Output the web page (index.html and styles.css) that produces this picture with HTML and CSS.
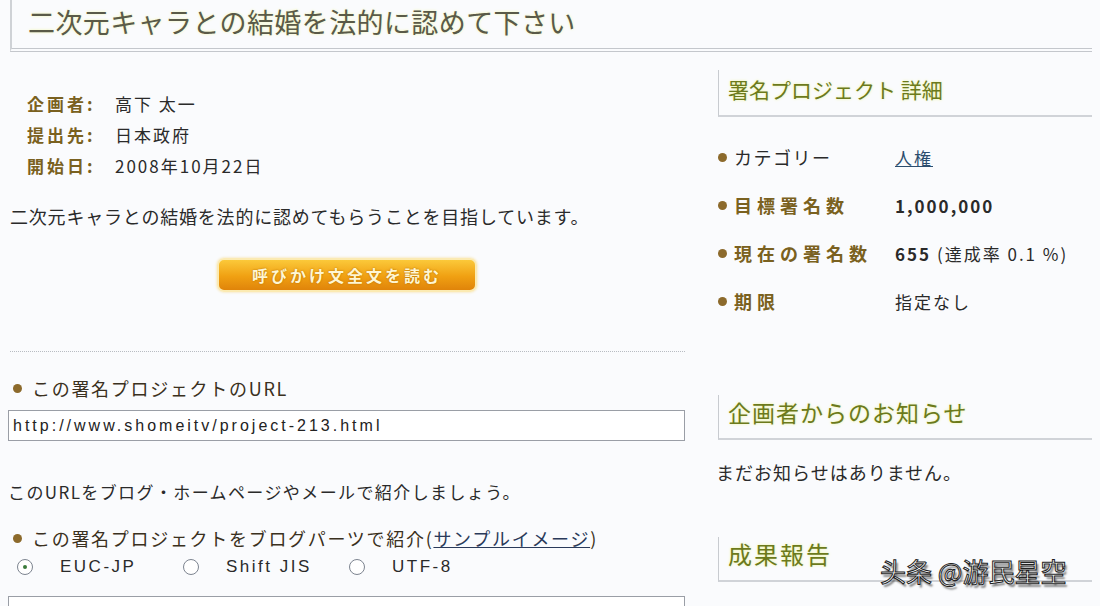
FILE: index.html
```html
<!DOCTYPE html>
<html lang="ja">
<head>
  <meta charset="UTF-8">
  <meta name="viewport" content="width=device-width, initial-scale=1.0">
  <title>署名プロジェクト</title>
  <link rel="stylesheet" href="styles.css">
</head>
<body>

  <!-- タイトル -->
  <div class="title-bar">
    <h1>二次元キャラとの結婚を法的に認めて下さい</h1>
  </div>

  <div class="main">

    <!-- 左カラム -->
    <div class="left">
      <dl class="meta">
        <div class="meta-row"><dt>企画者:</dt><dd>高下 太一</dd></div>
        <div class="meta-row"><dt>提出先:</dt><dd>日本政府</dd></div>
        <div class="meta-row"><dt>開始日:</dt><dd>2008年10月22日</dd></div>
      </dl>

      <p class="desc">二次元キャラとの結婚を法的に認めてもらうことを目指しています。</p>

      <div class="btn-wrap">
        <button class="read-btn">呼びかけ文全文を読む</button>
      </div>

      <hr class="dots">

      <h2 class="sub"><span class="dot"></span>この署名プロジェクトのURL</h2>
      <input class="url-box" type="text" value="http://www.shomeitv/project-213.html">

      <p class="intro">このURLをブログ・ホームページやメールで紹介しましょう。</p>

      <h2 class="sub second"><span class="dot"></span>この署名プロジェクトをブログパーツで紹介(<a href="#">サンプルイメージ</a>)</h2>
      <div class="radios">
        <label><span class="radio on"></span>EUC-JP</label>
        <label><span class="radio"></span>Shift JIS</label>
        <label><span class="radio"></span>UTF-8</label>
      </div>
      <div class="code-box"></div>
    </div>

    <!-- 右カラム -->
    <div class="right">
      <h3 class="box-head first">署名プロジェクト 詳細</h3>
      <ul class="detail">
        <li><span class="dot"></span><span class="label plain">カテゴリー</span><a href="#" class="val">人権</a></li>
        <li><span class="dot"></span><span class="label">目標署名数</span><span class="val strong">1,000,000</span></li>
        <li><span class="dot"></span><span class="label">現在の署名数</span><span class="val"><b>655</b> (達成率 0.1 %)</span></li>
        <li><span class="dot"></span><span class="label">期限</span><span class="val">指定なし</span></li>
      </ul>

      <h3 class="box-head notice-head">企画者からのお知らせ</h3>
      <p class="notice">まだお知らせはありません。</p>

      <h3 class="box-head report-head">成果報告</h3>
    </div>

  </div>

  <div class="watermark">头条 @游民星空</div>

</body>
</html>
```

FILE: styles.css
```css
* {
  box-sizing: border-box;
}

body {
  margin: 0;
  padding: 0;
  background-color: #fafbfd;
  font-family: 'Noto Sans CJK JP', 'Liberation Sans', sans-serif;
  color: #2a2a2a;
  position: relative;
  overflow: hidden;
  height: 606px;
}

/* タイトル */
.title-bar {
  margin: 0 8px 0 10px;
  height: 52px;
  border-left: 2px solid #cfd2d6;
  border-bottom: 4px double #c4c7cc;
  padding-left: 16px;
}

.title-bar h1 {
  margin: 0;
  font-size: 27px;
  font-weight: normal;
  line-height: 44px;
  letter-spacing: 0.4px;
  color: #5a5a48;
  text-shadow: 0 0 3px #f3f7b0;
}

.main {
  display: flex;
}

/* 左カラム */
.left {
  width: 700px;
  padding-left: 8px;
}

.meta {
  margin: 36px 0 0 19px;
}

.meta-row {
  display: flex;
  line-height: 31px;
  font-size: 17px;
}

.meta dt {
  width: 88px;
  font-weight: bold;
  color: #7a6120;
  letter-spacing: 3px;
}

.meta dd {
  margin: 0;
  letter-spacing: 2px;
}

.desc {
  margin: 20px 0 0 2px;
  line-height: 30px;
  font-size: 18px;
  letter-spacing: 0.8px;
}

.btn-wrap {
  margin-top: 27px;
  padding-left: 209px;
}

.read-btn {
  width: 260px;
  height: 34px;
  border: 2px solid #fbeab2;
  border-radius: 7px;
  background: linear-gradient(#fbc93a, #f0a012 55%, #e0840a);
  box-shadow: 0 0 3px #f5dd9a;
  color: #fff6d2;
  font-family: inherit;
  font-size: 16px;
  font-weight: bold;
  letter-spacing: 3px;
  text-shadow: 0 0 2px #b06a00;
}

.dots {
  margin: 59px 0 0 2px;
  width: 675px;
  border: none;
  border-top: 1px dotted #b8bcc2;
  height: 0;
}

.sub {
  margin: 22px 0 0 0;
  display: flex;
  align-items: center;
  font-size: 18px;
  font-weight: normal;
  line-height: 28px;
  letter-spacing: 1.7px;
  color: #3a3020;
}

.sub.second {
  margin-top: 18px;
}

.sub .dot {
  margin: 0 10px 0 5px;
}

.sub a {
  color: #2a3a5a;
}

.dot {
  display: inline-block;
  width: 9px;
  height: 9px;
  border-radius: 50%;
  background-color: #8c6a2c;
  flex-shrink: 0;
}

.url-box {
  display: block;
  margin-top: 8px;
  width: 677px;
  height: 31px;
  border: 1px solid #9a9ea6;
  background: #fff;
  padding: 0 4px;
  font-family: 'Liberation Sans', sans-serif;
  font-size: 16px;
  letter-spacing: 3px;
  color: #222;
}

.intro {
  margin: 37px 0 0 0;
  line-height: 28px;
  font-size: 17px;
  letter-spacing: 1.4px;
}

.radios {
  display: flex;
  margin-top: 1px;
  line-height: 28px;
  font-family: 'Liberation Sans', sans-serif;
  font-size: 17px;
  letter-spacing: 2.5px;
  padding-left: 9px;
}

.radios label {
  display: flex;
  align-items: center;
  width: 166px;
}

.radio {
  width: 16px;
  height: 16px;
  border: 1px solid #7d8490;
  border-radius: 50%;
  background: #fff;
  margin-right: 27px;
  position: relative;
}

.radio.on::after {
  content: "";
  position: absolute;
  left: 5px;
  top: 5px;
  width: 4px;
  height: 4px;
  border-radius: 50%;
  background: #3a7a3a;
}

.code-box {
  margin-top: 15px;
  width: 677px;
  height: 40px;
  border: 1px solid #9a9ea6;
  background: #fff;
}

/* 右カラム */
.right {
  margin-left: 16px;
  width: 376px;
}

.box-head {
  margin: 0 0 0 2px;
  border-left: 1px solid #c8cbd0;
  border-bottom: 2px solid #d0d3d8;
  padding: 4px 0 11px 9px;
  font-size: 22px;
  font-weight: normal;
  line-height: 30px;
  color: #6c7a1c;
  text-shadow: 0 0 3px #eef59a;
}

.box-head.first {
  margin-top: 18px;
  font-size: 21px;
}

.box-head.notice-head {
  margin-top: 70px;
  padding-top: 2px;
  font-size: 23px;
  letter-spacing: 1px;
}

.box-head.report-head {
  margin-top: 51px;
  padding-top: 2px;
  font-size: 24px;
  letter-spacing: 2px;
}

.detail {
  list-style: none;
  margin: 16px 0 0 0;
  padding: 0 0 0 2px;
}

.detail li {
  display: flex;
  align-items: center;
  height: 48px;
  font-size: 18px;
}

.detail .dot {
  margin-right: 7px;
}

.detail .label {
  width: 161px;
  font-weight: bold;
  color: #7a6120;
  letter-spacing: 5px;
}

.detail .label.plain {
  font-weight: normal;
  color: #2a2a2a;
  letter-spacing: 1.5px;
}

.detail .val {
  font-size: 17px;
  letter-spacing: 2px;
}

.detail a.val {
  color: #2c4d6e;
}

.detail .strong {
  font-weight: bold;
  letter-spacing: 2px;
}

.notice {
  margin: 18px 0 0 0;
  line-height: 28px;
  font-size: 18px;
  letter-spacing: 1px;
}

/* 透かし */
.watermark {
  position: absolute;
  left: 880px;
  top: 553px;
  font-family: 'Noto Sans CJK SC', sans-serif;
  font-size: 26px;
  line-height: 36px;
  color: #fff;
  -webkit-text-stroke: 1px #222;
  text-shadow: 2px 3px 2px rgba(0, 0, 0, 0.5);
}
```
